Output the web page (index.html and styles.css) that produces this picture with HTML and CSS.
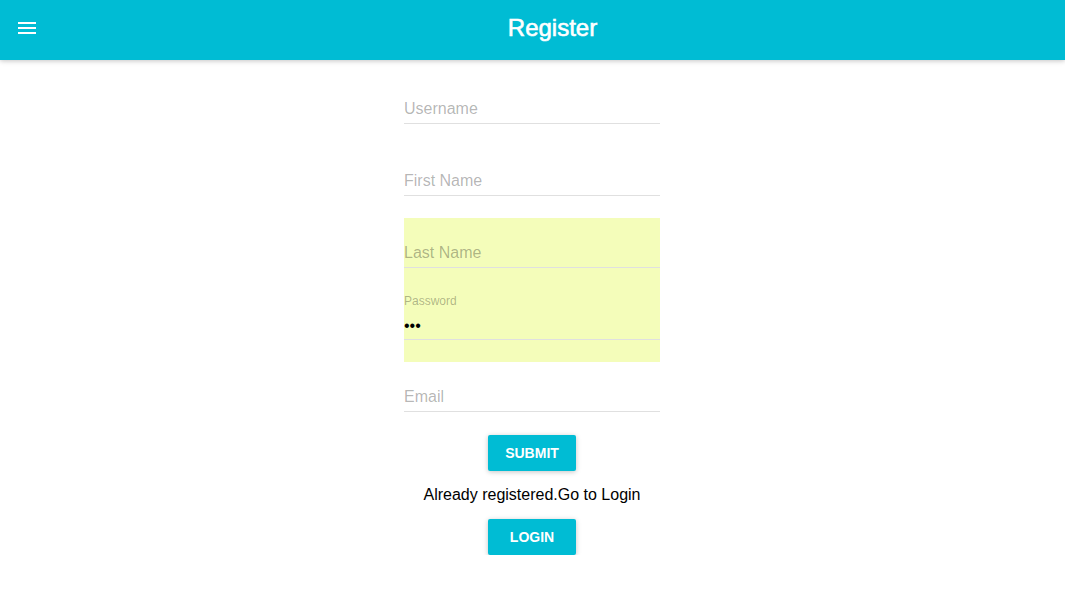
FILE: index.html
```html
<!DOCTYPE html>
<html>
<head>
<meta charset="utf-8">
<title>Register</title>
<link rel="stylesheet" href="styles.css">
</head>
<body>
<header class="appbar">
  <button class="menu-btn" aria-label="Menu">
    <svg width="24" height="24" viewBox="0 0 24 24"><path fill="#fff" d="M3 18h18v-2H3v2zm0-5h18v-2H3v2zm0-7v2h18V6H3z"/></svg>
  </button>
  <h1 class="title">Register</h1>
</header>
<main class="page">
  <form class="form">
    <div class="field">
      <label class="label">Username</label>
      <input class="input" type="text">
      <div class="underline"></div>
    </div>
    <div class="field">
      <label class="label">First Name</label>
      <input class="input" type="text">
      <div class="underline"></div>
    </div>
    <div class="field">
      <label class="label">Last Name</label>
      <input class="input autofill" type="text">
      <div class="underline"></div>
    </div>
    <div class="field">
      <label class="label shrunk">Password</label>
      <input class="input autofill" type="password" value="abc">
      <div class="underline"></div>
    </div>
    <div class="field">
      <label class="label">Email</label>
      <input class="input" type="email">
      <div class="underline"></div>
    </div>
    <button type="button" class="btn submit">Submit</button>
    <p class="note">Already registered.Go to Login</p>
    <button type="button" class="btn">Login</button>
  </form>
</main>
</body>
</html>
```
FILE: styles.css
```css
html, body {
  margin: 0;
  padding: 0;
  background: #fff;
  font-family: "Liberation Sans", Arial, Helvetica, sans-serif;
}

.appbar {
  position: relative;
  z-index: 2;
  display: flex;
  align-items: flex-start;
  height: 60px;
  background: #00bcd4;
  box-shadow: 0 1px 6px rgba(0,0,0,0.12), 0 1px 4px rgba(0,0,0,0.12);
  padding-right: 24px;
}

.menu-btn {
  width: 64px;
  height: 60px;
  padding: 16px 0 0 15px;
  margin: 0;
  border: none;
  background: transparent;
  display: flex;
  align-items: flex-start;
  justify-content: flex-start;
}

.menu-btn svg {
  display: block;
}

.title {
  flex: 1;
  margin: 0;
  text-align: center;
  color: #fff;
  font-size: 24px;
  font-weight: 400;
  line-height: 55px;
  -webkit-text-stroke: 0.6px #fff;
}

.page {
  display: flex;
  justify-content: center;
  padding-right: 1px;
}

.form {
  width: 256px;
  display: flex;
  flex-direction: column;
  align-items: center;
}

.field {
  position: relative;
  width: 256px;
  height: 72px;
  font-size: 16px;
}

.label {
  position: absolute;
  left: 0;
  top: 38px;
  z-index: 1;
  line-height: 22px;
  font-size: 16px;
  color: rgba(0,0,0,0.3);
  transform-origin: left top;
  white-space: nowrap;
}

.label.shrunk {
  transform: scale(0.75) translate(0, -28px);
}

.input {
  display: block;
  box-sizing: border-box;
  width: 100%;
  height: 72px;
  margin: 14px 0 0 0;
  padding: 0;
  border: none;
  outline: none;
  background: transparent;
  font-family: "Liberation Sans", Arial, sans-serif;
  font-size: 16px;
  color: #000;
  position: relative;
}

.input.autofill {
  background: #f4fdba;
}

.underline {
  position: absolute;
  left: 0;
  right: 0;
  top: 63px;
  height: 0;
  border-bottom: 1px solid #e0e0e0;
  z-index: 1;
}

.btn {
  min-width: 88px;
  height: 36px;
  padding: 0 16px;
  border: none;
  border-radius: 2px;
  background: #00bcd4;
  color: #fff;
  font-family: "Liberation Sans", Arial, sans-serif;
  font-size: 14px;
  font-weight: 700;
  text-transform: uppercase;
  line-height: 36px;
  box-shadow: 0 1px 6px rgba(0,0,0,0.12), 0 1px 4px rgba(0,0,0,0.12);
  cursor: pointer;
}

.btn.submit {
  margin-top: 15px;
}

.note {
  margin: 0;
  height: 48px;
  line-height: 48px;
  font-size: 16px;
  color: #000;
  white-space: nowrap;
}
```
